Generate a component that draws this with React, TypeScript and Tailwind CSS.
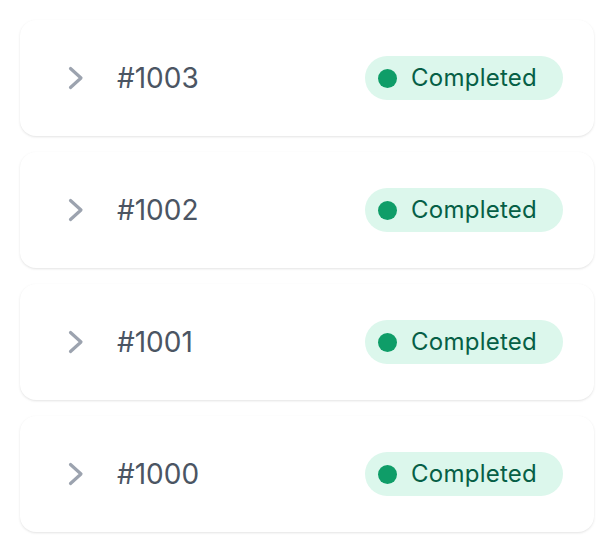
import React from 'react';

const orders = ['#1003', '#1002', '#1001', '#1000'];

function Chevron() {
  return (
    <svg width="16" height="24" viewBox="0 0 16 24" fill="none" className="shrink-0">
      <path
        d="M2.5 2.5 L13 12 L2.5 21.5"
        stroke="#9ca3af"
        strokeWidth="3.2"
        strokeLinecap="round"
        strokeLinejoin="round"
      />
    </svg>
  );
}

function OrderRow({ id }: { id: string }) {
  return (
    <div className="flex h-[116px] items-center rounded-2xl bg-white pl-12 pr-[31px] shadow-[0_1px_3px_rgba(0,0,0,0.08),0_1px_2px_rgba(0,0,0,0.04)]">
      <Chevron />
      <span className="ml-[33px] text-[28px] text-[#4b5563]">{id}</span>
      <div className="ml-auto flex h-[44px] items-center gap-[14px] rounded-full bg-[#dcf7ec] pl-[13px] pr-[26px]">
        <span className="h-[19px] w-[19px] rounded-full bg-[#0f9d68]" />
        <span className="text-[24px] tracking-[0.01em] text-[#065f46]">Completed</span>
      </div>
    </div>
  );
}

export default function App() {
  return (
    <div
      className="flex min-h-[552px] flex-col gap-4 bg-white p-5"
      style={{ fontFamily: 'Inter, "Noto Sans", sans-serif' }}
    >
      {orders.map((id) => (
        <OrderRow key={id} id={id} />
      ))}
    </div>
  );
}
